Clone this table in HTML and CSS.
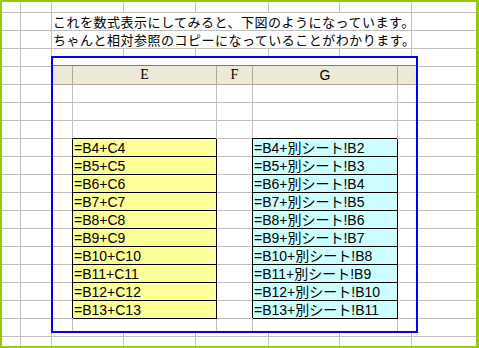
FILE: index.html
```
<!DOCTYPE html>
<html lang="ja">
<head>
<meta charset="utf-8">
<title>相対参照</title>
<link rel="stylesheet" href="styles.css">
</head>
<body>
<div class="frame">
  <div class="sheet">
    <span class="c"></span><span class="c"></span><span class="c"></span><span class="c"></span><span class="c"></span><span class="c"></span><span class="c"></span><span class="c e"></span>
    <span class="c"></span><span class="c"></span><span class="c txt">これを数式表示にしてみると、下図のようになっています。</span><span class="c e"></span>
    <span class="c"></span><span class="c"></span><span class="c txt">ちゃんと相対参照のコピーになっていることがわかります。</span><span class="c e"></span>
    <span class="c"></span><span class="c"></span><span class="c"></span><span class="c"></span><span class="c"></span><span class="c"></span><span class="c"></span><span class="c e"></span>
    <span class="c"></span><span class="c"></span><span class="c"></span><span class="c"></span><span class="c"></span><span class="c"></span><span class="c"></span><span class="c e"></span>
    <span class="c"></span><span class="c"></span><span class="c"></span><span class="c"></span><span class="c"></span><span class="c"></span><span class="c"></span><span class="c e"></span>
    <span class="c"></span><span class="c"></span><span class="c"></span><span class="c"></span><span class="c"></span><span class="c"></span><span class="c"></span><span class="c e"></span>
    <span class="c"></span><span class="c"></span><span class="c"></span><span class="c"></span><span class="c"></span><span class="c"></span><span class="c"></span><span class="c e"></span>
    <span class="c"></span><span class="c"></span><span class="c"></span><span class="c"></span><span class="c"></span><span class="c"></span><span class="c"></span><span class="c e"></span>
    <span class="c"></span><span class="c"></span><span class="c"></span><span class="c"></span><span class="c"></span><span class="c"></span><span class="c"></span><span class="c e"></span>
    <span class="c"></span><span class="c"></span><span class="c"></span><span class="c"></span><span class="c"></span><span class="c"></span><span class="c"></span><span class="c e"></span>
    <span class="c"></span><span class="c"></span><span class="c"></span><span class="c"></span><span class="c"></span><span class="c"></span><span class="c"></span><span class="c e"></span>
    <span class="c"></span><span class="c"></span><span class="c"></span><span class="c"></span><span class="c"></span><span class="c"></span><span class="c"></span><span class="c e"></span>
    <span class="c"></span><span class="c"></span><span class="c"></span><span class="c"></span><span class="c"></span><span class="c"></span><span class="c"></span><span class="c e"></span>
    <span class="c"></span><span class="c"></span><span class="c"></span><span class="c"></span><span class="c"></span><span class="c"></span><span class="c"></span><span class="c e"></span>
    <span class="c"></span><span class="c"></span><span class="c"></span><span class="c"></span><span class="c"></span><span class="c"></span><span class="c"></span><span class="c e"></span>
    <span class="c"></span><span class="c"></span><span class="c"></span><span class="c"></span><span class="c"></span><span class="c"></span><span class="c"></span><span class="c e"></span>
    <span class="c"></span><span class="c"></span><span class="c"></span><span class="c"></span><span class="c"></span><span class="c"></span><span class="c"></span><span class="c e"></span>
    <span class="c"></span><span class="c"></span><span class="c"></span><span class="c"></span><span class="c"></span><span class="c"></span><span class="c"></span><span class="c e"></span>
    <span class="c b"></span><span class="c b"></span><span class="c b"></span><span class="c b"></span><span class="c b"></span><span class="c b"></span><span class="c b"></span><span class="c b e"></span>
  </div>

  <div class="pic">
    <div class="igrid">
      <span class="hd"></span><span class="hd serif">E</span><span class="hd serif">F</span><span class="hd">G</span><span class="hd e"></span>

      <span class="ic"></span><span class="ic"></span><span class="ic"></span><span class="ic"></span><span class="ic e"></span>
      <span class="ic"></span><span class="ic"></span><span class="ic"></span><span class="ic"></span><span class="ic e"></span>
      <span class="ic"></span><span class="ic"></span><span class="ic"></span><span class="ic"></span><span class="ic e"></span>

      <span class="ic"></span><span class="ic fy">=B4+C4</span><span class="ic"></span><span class="ic fc">=B4+別シート!B2</span><span class="ic e"></span>
      <span class="ic"></span><span class="ic fy">=B5+C5</span><span class="ic"></span><span class="ic fc">=B5+別シート!B3</span><span class="ic e"></span>
      <span class="ic"></span><span class="ic fy">=B6+C6</span><span class="ic"></span><span class="ic fc">=B6+別シート!B4</span><span class="ic e"></span>
      <span class="ic"></span><span class="ic fy">=B7+C7</span><span class="ic"></span><span class="ic fc">=B7+別シート!B5</span><span class="ic e"></span>
      <span class="ic"></span><span class="ic fy">=B8+C8</span><span class="ic"></span><span class="ic fc">=B8+別シート!B6</span><span class="ic e"></span>
      <span class="ic"></span><span class="ic fy">=B9+C9</span><span class="ic"></span><span class="ic fc">=B9+別シート!B7</span><span class="ic e"></span>
      <span class="ic"></span><span class="ic fy">=B10+C10</span><span class="ic"></span><span class="ic fc">=B10+別シート!B8</span><span class="ic e"></span>
      <span class="ic"></span><span class="ic fy">=B11+C11</span><span class="ic"></span><span class="ic fc">=B11+別シート!B9</span><span class="ic e"></span>
      <span class="ic"></span><span class="ic fy">=B12+C12</span><span class="ic"></span><span class="ic fc">=B12+別シート!B10</span><span class="ic e"></span>
      <span class="ic"></span><span class="ic fy">=B13+C13</span><span class="ic"></span><span class="ic fc">=B13+別シート!B11</span><span class="ic e"></span>

      <span class="ic b"></span><span class="ic b"></span><span class="ic b"></span><span class="ic b"></span><span class="ic b e"></span>
    </div>
  </div>
</div>
</body>
</html>
```
FILE: styles.css
```
html, body {
  margin: 0;
  padding: 0;
  background: #ffffff;
}

.frame {
  position: relative;
  box-sizing: border-box;
  width: 479px;
  height: 348px;
  overflow: hidden;
  border-style: solid;
  border-color: #99cc00;
  border-width: 2px 3px 2px 2px;
  background: #ffffff;
}

.sheet {
  display: grid;
  grid-template-columns: 19px 31px 72px 72px 73px 71px 72px 64px;
  grid-template-rows: 11px repeat(18, 18px) 9px;
}

.c {
  box-sizing: border-box;
  border-right: 1px solid #c0c0c0;
  border-bottom: 1px solid #c0c0c0;
}

.c.e {
  border-right: none;
}

.c.b {
  border-bottom: none;
}

.txt {
  grid-column: span 5;
  padding-left: 1px;
  font-family: "Noto Sans CJK JP", sans-serif;
  font-size: 13px;
  letter-spacing: 0.5px;
  line-height: 17px;
  white-space: nowrap;
  color: #000000;
}

.pic {
  position: absolute;
  left: 49px;
  top: 54px;
  box-sizing: border-box;
  width: 367px;
  height: 277px;
  border: 2px solid #0000ff;
  padding-top: 7px;
  background: #ffffff;
  overflow: hidden;
}

.igrid {
  display: grid;
  grid-template-columns: 20px 144px 36px 145px 18px;
  grid-template-rows: 20px repeat(3, 18px) repeat(10, 18px) 12px;
}

.hd {
  box-sizing: border-box;
  background: #ece9d8;
  border-top: 1px solid #7f7d74;
  border-bottom: 1px solid #aca899;
  border-right: 1px solid #aca899;
  text-align: center;
  font-family: "Liberation Sans", sans-serif;
  font-size: 14px;
  line-height: 18px;
  color: #000000;
}

.hd.serif {
  font-family: "Liberation Serif", serif;
}

.hd.e {
  border-right: none;
}

.ic {
  box-sizing: border-box;
  border-right: 1px solid #c0c0c0;
  border-bottom: 1px solid #c0c0c0;
  font-family: "Liberation Sans", "Noto Sans CJK JP", sans-serif;
  font-size: 14px;
  line-height: 17px;
  white-space: nowrap;
  color: #000000;
}

.ic.e {
  border-right: none;
}

.ic.b {
  border-bottom: none;
}

.fy,
.fc {
  border-right-color: #000000;
  border-bottom-color: #000000;
  box-shadow: -1px -1px 0 0 #000000;
  padding-left: 1px;
  padding-top: 1px;
}

.fy {
  background: #ffff99;
}

.fc {
  background: #ccffff;
}
```
